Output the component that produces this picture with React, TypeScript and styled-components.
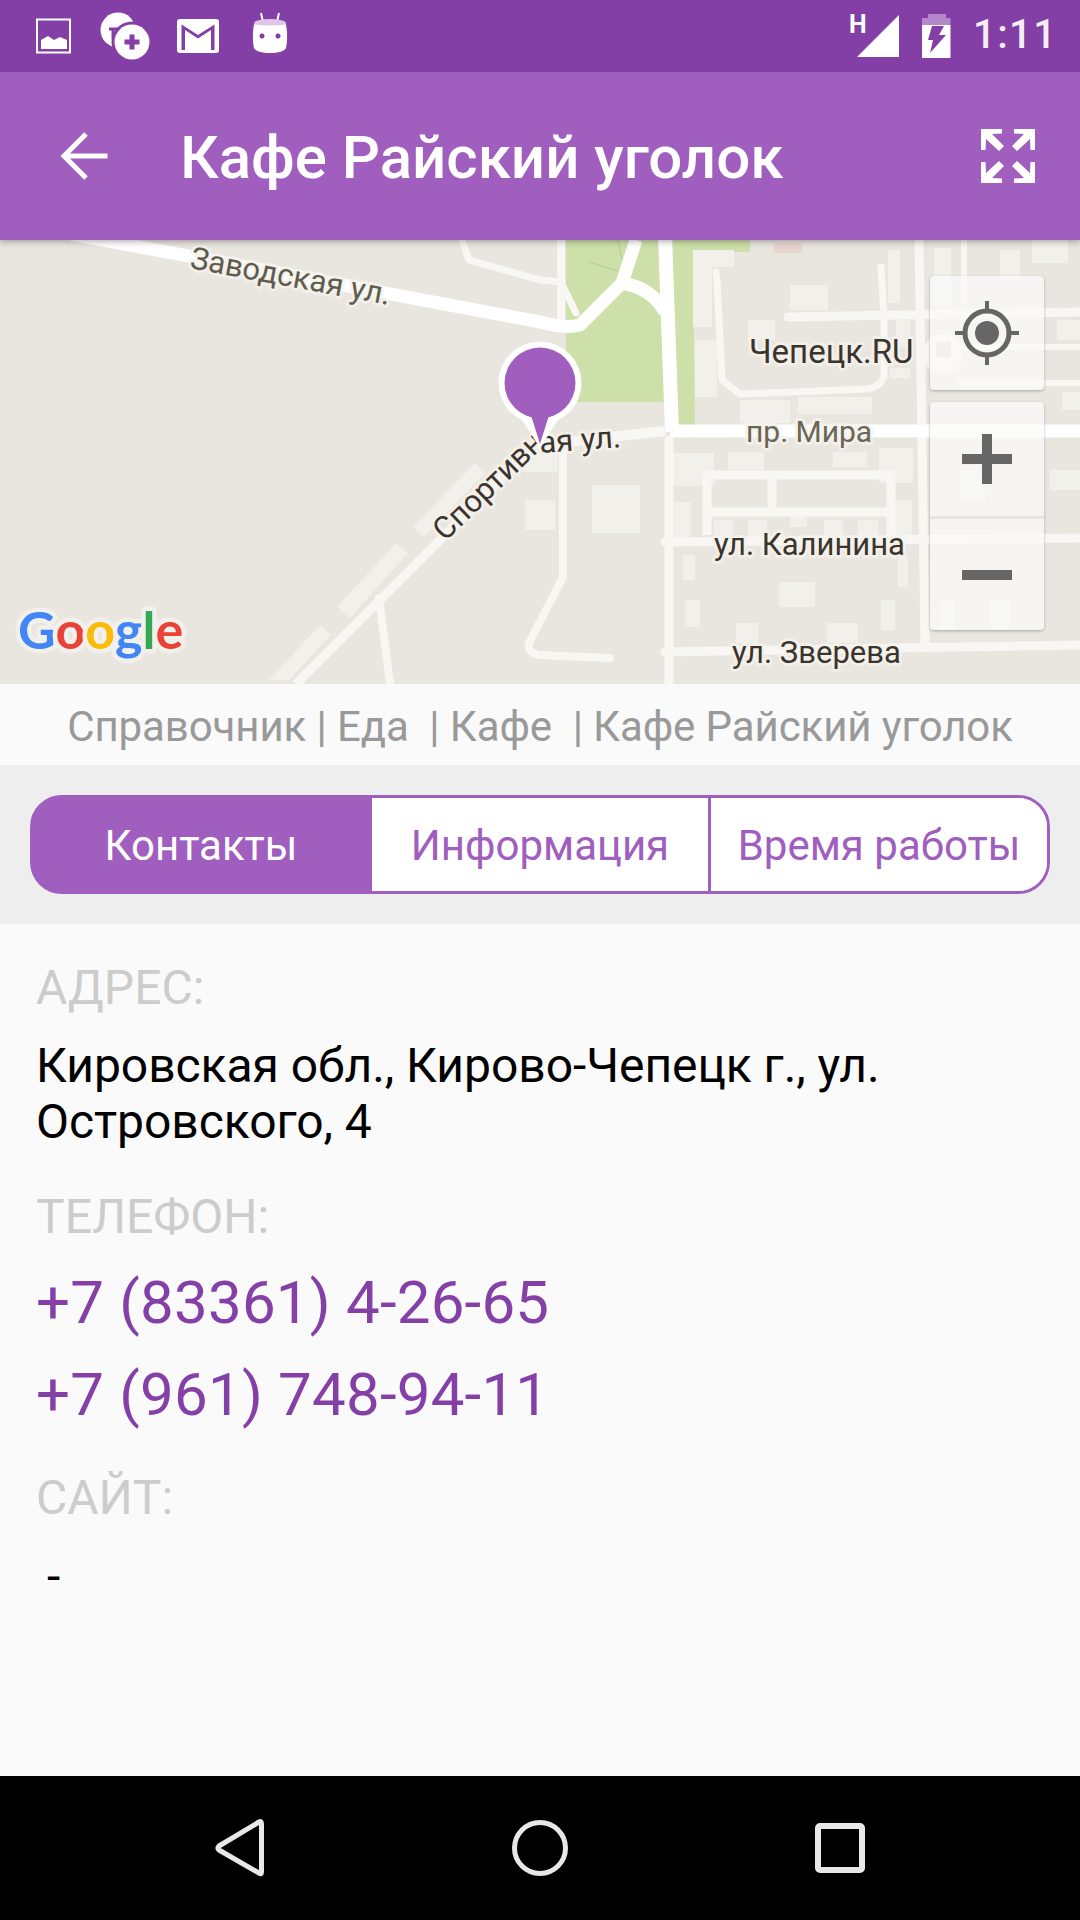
import React from "react";
import styled, { createGlobalStyle } from "styled-components";

const Global = createGlobalStyle`
  html, body { margin: 0; padding: 0; background: #fafafa; }
  #root { width: 1080px; height: 1920px; overflow: hidden; }
  * { box-sizing: border-box; }
`;

const Page = styled.div`
  width: 1080px;
  height: 1920px;
  display: flex;
  flex-direction: column;
  font-family: Roboto, "Noto Sans", sans-serif;
  background: #fafafa;
`;

const StatusBar = styled.div`
  height: 72px;
  flex: none;
  background: #833fa5;
  display: flex;
  align-items: center;
  padding-left: 17px;
  position: relative;
  z-index: 3;
`;
const SlotIcon = styled.svg`
  width: 72px;
  height: 72px;
  flex: none;
  display: block;
`;
const SignalIcon = styled.svg`
  width: 72px;
  height: 72px;
  flex: none;
  display: block;
  margin-left: auto;
`;
const BatteryIcon = styled.svg`
  width: 48px;
  height: 72px;
  flex: none;
  display: block;
  margin-left: 5px;
`;
const Clock = styled.div`
  font-size: 40px;
  font-weight: 500;
  line-height: 72px;
  color: rgba(255, 255, 255, 0.92);
  width: 76px;
  margin-left: 12px;
  margin-right: 31px;
  letter-spacing: 1.4px;
  position: relative;
  top: -1px;
`;

const AppBar = styled.header`
  height: 168px;
  flex: none;
  background: #a05ebe;
  display: flex;
  align-items: center;
  padding: 0 45px 0 60px;
  position: relative;
  z-index: 2;
  box-shadow: 0 2px 6px rgba(0, 0, 0, 0.3);
`;
const BackIcon = styled.svg`
  width: 48px;
  height: 48px;
  flex: none;
`;
const Title = styled.h1`
  margin: 4px 0 0 72px;
  font-size: 60px;
  line-height: 80px;
  font-weight: 500;
  color: #fff;
  white-space: nowrap;
`;
const ExpandIcon = styled.svg`
  width: 54px;
  height: 54px;
  flex: none;
  margin-left: auto;
`;

const MapArea = styled.section`
  position: relative;
  height: 444px;
  flex: none;
  background: #e9e5df;
  overflow: hidden;
`;
const MapCanvas = styled.svg`
  width: 1080px;
  height: 444px;
  display: block;
`;
const MapControls = styled.div`
  position: absolute;
  top: 36px;
  right: 36px;
  width: 114px;
  display: flex;
  flex-direction: column;
  gap: 12px;
`;
const ControlCard = styled.div`
  background: rgba(250, 250, 248, 0.78);
  border-radius: 4px;
  box-shadow: 0 1px 3px rgba(0, 0, 0, 0.28);
  display: flex;
  flex-direction: column;
`;
const ControlButton = styled.div<{ $divided?: boolean }>`
  height: 114px;
  display: flex;
  align-items: center;
  justify-content: center;
  border-top: ${(p) => (p.$divided ? "3px solid rgba(225,225,222,.8)" : "none")};
`;
const ControlIcon = styled.svg`
  width: 70px;
  height: 70px;
  display: block;
`;

const Breadcrumbs = styled.div`
  height: 81px;
  flex: none;
  background: #fafafa;
  color: #999;
  font-size: 42px;
  letter-spacing: -0.1px;
  line-height: 86px;
  text-align: center;
  white-space: pre;
`;

const TabBar = styled.div`
  height: 159px;
  flex: none;
  background: #eee;
  padding: 30px 30px 30px;
`;
const Segmented = styled.div`
  height: 99px;
  display: flex;
  border: 3px solid #a05ebe;
  border-radius: 32px;
  overflow: hidden;
  background: linear-gradient(90deg, #a05ebe 30%, #fff 30%);
`;
const Tab = styled.div<{ $active?: boolean }>`
  flex: 1;
  display: flex;
  align-items: center;
  justify-content: center;
  font-size: 42px;
  padding-top: 2px;
  white-space: nowrap;
  color: ${(p) => (p.$active ? "#fff" : "#a05ebe")};
  background: ${(p) => (p.$active ? "#a05ebe" : "#fff")};
  & + & {
    border-left: 3px solid #a05ebe;
  }
`;

const Content = styled.main`
  flex: 1;
  background: #fafafa;
  padding: 36px 36px 0;
`;
const Label = styled.div<{ $gap: number }>`
  font-size: 48px;
  line-height: 56px;
  color: #ccc;
  margin-top: ${(p) => p.$gap}px;
`;
const Address = styled.div`
  font-size: 48px;
  line-height: 56px;
  letter-spacing: -0.05px;
  color: #000;
  margin-top: 22px;
`;
const Phone = styled.div<{ $first?: boolean }>`
  font-size: 60px;
  line-height: 92px;
  letter-spacing: 0.22px;
  color: #8540a8;
  margin-top: ${(p) => (p.$first ? "12px" : "0")};
`;
const Site = styled.div`
  font-size: 48px;
  line-height: 56px;
  color: #000;
  margin-top: 23px;
  padding-left: 11px;
`;

const NavBar = styled.nav`
  height: 144px;
  flex: none;
  background: #000;
  display: flex;
  align-items: center;
  justify-content: center;
`;
const NavSlot = styled.svg`
  width: 300px;
  height: 144px;
  display: block;
  flex: none;
`;

const MapRoads = styled.g`
  fill: none;
  stroke: #f8f7f3;
  stroke-linecap: round;
  stroke-linejoin: round;
`;
const MainRoads = styled.g`
  fill: none;
  stroke: #fff;
  stroke-linecap: butt;
  stroke-linejoin: round;
`;
const MapLabel = styled.text<{ $tone?: string; $size?: number }>`
  font-family: Roboto, sans-serif;
  font-size: ${(p) => p.$size ?? 31}px;
  fill: ${(p) => p.$tone ?? "#3b342c"};
  stroke: rgba(244, 242, 236, 0.85);
  stroke-width: 6px;
  stroke-linejoin: round;
  paint-order: stroke;
`;
const GoogleMark = styled.text`
  font-family: Lato, Roboto, sans-serif;
  font-size: 52px;
  font-weight: 700;
  stroke: #f2f0ec;
  stroke-width: 9px;
  stroke-linejoin: round;
  paint-order: stroke;
`;
const StatusLetter = styled.text`
  font-family: Roboto, sans-serif;
  font-size: 25px;
  font-weight: 700;
  fill: #fff;
`;

const buildings: [number, number, number, number][] = [
  [693, 250, 41, 17], [693, 250, 19, 77], [790, 285, 38, 25], [888, 250, 12, 53],
  [934, 248, 17, 58], [695, 340, 22, 57], [748, 320, 27, 20], [896, 320, 14, 27],
  [890, 368, 20, 10], [740, 400, 50, 23], [798, 397, 74, 17], [673, 453, 41, 33],
  [728, 452, 36, 18], [833, 452, 34, 15], [879, 448, 34, 35], [592, 485, 48, 48],
  [674, 502, 17, 35], [895, 500, 17, 37], [790, 510, 17, 17], [714, 520, 19, 17],
  [748, 520, 19, 17], [824, 520, 19, 17], [858, 520, 20, 17], [683, 555, 12, 25],
  [898, 557, 10, 30], [779, 582, 36, 25], [685, 600, 15, 27], [881, 600, 14, 30],
  [736, 623, 22, 20], [827, 623, 31, 20], [525, 500, 30, 30], [523, 447, 35, 25],
  [1032, 240, 36, 23], [1057, 320, 23, 20], [1062, 392, 18, 18], [1000, 250, 20, 30],
  [1050, 470, 30, 20], [960, 470, 25, 30], [940, 600, 15, 30], [990, 600, 20, 30],
];

const EXPAND_CORNER = "M0 0H21V4.500L11 5L23 17L18 22L5 10L4.500 21H0z";

export default function App() {
  return (
    <Page>
      <Global />
      <StatusBar>
        <SlotIcon viewBox="0 0 72 72">
          <rect x="20" y="19.500" width="33" height="33" fill="none" stroke="#fff" strokeWidth="2" />
          <path d="M24 49v-9l7-4 6 4 6-3 7 3v9z" fill="#fff" />
        </SlotIcon>
        <SlotIcon viewBox="0 0 72 72">
          <circle cx="29" cy="30" r="17.500" fill="#fff" />
          <path d="M20 29h9M24 29v10" stroke="#833fa5" strokeWidth="3" fill="none" />
          <circle cx="43" cy="42" r="20.500" fill="#833fa5" />
          <circle cx="43" cy="42" r="17.500" fill="#fff" />
          <path d="M43 34.500v15M35.500 42h15" stroke="#833fa5" strokeWidth="5" />
        </SlotIcon>
        <SlotIcon viewBox="0 0 72 72">
          <rect x="16" y="19" width="42" height="34" rx="3" fill="#fff" />
          <path d="M20.500 50V24.500L37 35l16.500-10.500V50h-3.500V30L37 38.500 24 30v20z" fill="#833fa5" />
        </SlotIcon>
        <SlotIcon viewBox="0 0 72 72">
          <path d="M28 13l2 9M46 13l-2 9" stroke="#fff" strokeWidth="2" />
          <ellipse cx="37" cy="23" rx="16" ry="4" fill="#dcc8e6" />
          <path d="M21 24c5 2 27 2 32 0c1.500 8 1.500 17 0 24c-1 3-8 5-16 5s-15-2-16-5c-1.500-7-1.500-16 0-24z" fill="#fff" />
          <circle cx="29" cy="36" r="2.500" fill="#833fa5" />
          <circle cx="45" cy="36" r="2.500" fill="#833fa5" />
        </SlotIcon>
        <SignalIcon viewBox="0 0 72 72">
          <StatusLetter x="13" y="33">H</StatusLetter>
          <path d="M21 57L63 15v42z" fill="#fff" />
        </SignalIcon>
        <BatteryIcon viewBox="0 0 48 72">
          <path d="M15 14h18v4h4.500v7H9v-7h6z" fill="#b288c9" />
          <path d="M9 25h28.500v33H9z" fill="#fff" />
          <path d="M19 26h12l-5 9h7L17 53l3-13h-5z" fill="#833fa5" />
        </BatteryIcon>
        <Clock>1:11</Clock>
      </StatusBar>

      <AppBar>
        <BackIcon viewBox="0 0 48 48">
          <path d="M47.500 24H4M26 2L4 24l22 22" fill="none" stroke="#fff" strokeWidth="5" />
        </BackIcon>
        <Title>Кафе Райский уголок</Title>
        <ExpandIcon viewBox="0 0 54 54">
          <path d={EXPAND_CORNER} fill="#fff" />
          <path d={EXPAND_CORNER} fill="#fff" transform="translate(54 0) scale(-1 1)" />
          <path d={EXPAND_CORNER} fill="#fff" transform="translate(0 54) scale(1 -1)" />
          <path d={EXPAND_CORNER} fill="#fff" transform="translate(54 54) scale(-1 -1)" />
        </ExpandIcon>
      </AppBar>

      <MapArea>
        <MapCanvas viewBox="0 240 1080 444">
          <path d="M566 240H750v12H693l2 178H670l-5-28H566z" fill="#cde0a9" />
          <path d="M610 240l8 0 4 20M590 262l28 9" fill="none" stroke="#b9c89a" strokeWidth="1" />
          {buildings.map(([x, y, w, h], i) => (
            <rect key={i} x={x} y={y} width={w} height={h} fill="#f2f0ea" />
          ))}
          <rect x="774" y="243" width="28" height="10" fill="#e8d5d0" />
          <path d="M475 463l10 10-61 64-11-10zM396 543l12 10-58 65-13-11zM320 625l11 10-42 45h-20z" fill="#f2f0ea" />
          <MapRoads>
            <path d="M296 684L527 453" strokeWidth="9" strokeLinecap="butt" />
            <path d="M379 598L390 684" strokeWidth="8" />
            <path d="M462 240l7 20 71 20 21 2 15 31" strokeWidth="7" />
            <path d="M561 240V325M563 453v124l-34 66q-2 10 10 12l71 3" strokeWidth="8" />
            <path d="M669 440v244" strokeWidth="9" />
            <path d="M788 317L1080 312" strokeWidth="9" />
            <path d="M881 267l3 50v60q-4 10-17 12l-127 5-18-14-5-100-1-8" strokeWidth="7" />
            <path d="M919 240l6 404" strokeWidth="9" />
            <path d="M964 240v60M960 383h120M940 347h140" strokeWidth="6" />
            <path d="M707 535v-60h184v65M772 475v37M707 512h184" strokeWidth="9" strokeLinecap="butt" />
            <path d="M665 542l415-4M665 652l415-7" strokeWidth="9" />
            <path d="M540 445l125-14" strokeWidth="10" strokeLinecap="butt" />
          </MapRoads>
          <MainRoads>
            <path d="M60 232L540 322q26 7 40 3l42-42 14-43" strokeWidth="13" />
            <path d="M622 283q30 5 43 29" strokeWidth="13" />
            <path d="M665 236l7 196" strokeWidth="14" />
            <path d="M670 431H1080" strokeWidth="13" />
          </MainRoads>
          <circle cx="943" cy="354" r="20" fill="#f8f7f3" />
          <rect x="936" y="342" width="15" height="15" fill="#dcd3d3" />

          <MapLabel x="189" y="268" $tone="#5f5b4d" transform="rotate(10.500 189 268)">Заводская ул.</MapLabel>
          <MapLabel x="445" y="542" transform="rotate(-44 445 542)">Спортивн</MapLabel>
          <MapLabel x="540" y="453" transform="rotate(-4 540 453)">ая ул.</MapLabel>
          <MapLabel x="749" y="363" $size={33}>Чепецк.RU</MapLabel>
          <MapLabel x="746" y="442" $tone="#6a6655" $size={30}>пр. Мира</MapLabel>
          <MapLabel x="714" y="555">ул. Калинина</MapLabel>
          <MapLabel x="732" y="663">ул. Зверева</MapLabel>

          <path d="M522 420h36l-18 28z" fill="#fff" />
          <circle cx="540" cy="383" r="41.500" fill="#fff" />
          <circle cx="540" cy="383" r="35.500" fill="#a05ebe" />
          <path d="M530 412h20l-10 32z" fill="#a05ebe" />

          <GoogleMark x="18" y="649">
            <tspan fill="#4285f4">G</tspan>
            <tspan fill="#ea4335">o</tspan>
            <tspan fill="#fbbc05">o</tspan>
            <tspan fill="#4285f4">g</tspan>
            <tspan fill="#34a853">l</tspan>
            <tspan fill="#ea4335">e</tspan>
          </GoogleMark>
        </MapCanvas>
        <MapControls>
          <ControlCard>
            <ControlButton>
              <ControlIcon viewBox="0 0 70 70">
                <circle cx="35" cy="35" r="22" fill="none" stroke="#666" strokeWidth="5" />
                <circle cx="35" cy="35" r="12" fill="#666" />
                <path d="M35 3v12M35 55v12M3 35h12M55 35h12" stroke="#666" strokeWidth="4" />
              </ControlIcon>
            </ControlButton>
          </ControlCard>
          <ControlCard>
            <ControlButton>
              <ControlIcon viewBox="0 0 70 70">
                <path d="M35 10v50M10 35h50" stroke="#666" strokeWidth="10" />
              </ControlIcon>
            </ControlButton>
            <ControlButton $divided>
              <ControlIcon viewBox="0 0 70 70">
                <path d="M10 35h50" stroke="#666" strokeWidth="10" />
              </ControlIcon>
            </ControlButton>
          </ControlCard>
        </MapControls>
      </MapArea>

      <Breadcrumbs>{"Справочник | Еда  | Кафе  | Кафе Райский уголок"}</Breadcrumbs>

      <TabBar>
        <Segmented>
          <Tab $active>Контакты</Tab>
          <Tab>Информация</Tab>
          <Tab>Время работы</Tab>
        </Segmented>
      </TabBar>

      <Content>
        <Label $gap={0}>АДРЕС:</Label>
        <Address>
          Кировская обл., Кирово-Чепецк г., ул.
          <br />
          Островского, 4
        </Address>
        <Label $gap={39}>ТЕЛЕФОН:</Label>
        <Phone $first>+7 (83361) 4-26-65</Phone>
        <Phone>+7 (961) 748-94-11</Phone>
        <Label $gap={29}>САЙТ:</Label>
        <Site>-</Site>
      </Content>

      <NavBar>
        <NavSlot viewBox="0 0 300 144">
          <path d="M171.500 48v48q0 3-2.500 1L129 74q-2-2 0-4l40-24q2.500-1.500 2.500 2z" fill="none" stroke="#e8e8e8" strokeWidth="5" strokeLinejoin="round" />
        </NavSlot>
        <NavSlot viewBox="0 0 300 144">
          <circle cx="150" cy="72" r="25.500" fill="none" stroke="#e8e8e8" strokeWidth="5" />
        </NavSlot>
        <NavSlot viewBox="0 0 300 144">
          <rect x="128" y="50" width="44" height="44" rx="2" fill="none" stroke="#e8e8e8" strokeWidth="6" />
        </NavSlot>
      </NavBar>
    </Page>
  );
}
